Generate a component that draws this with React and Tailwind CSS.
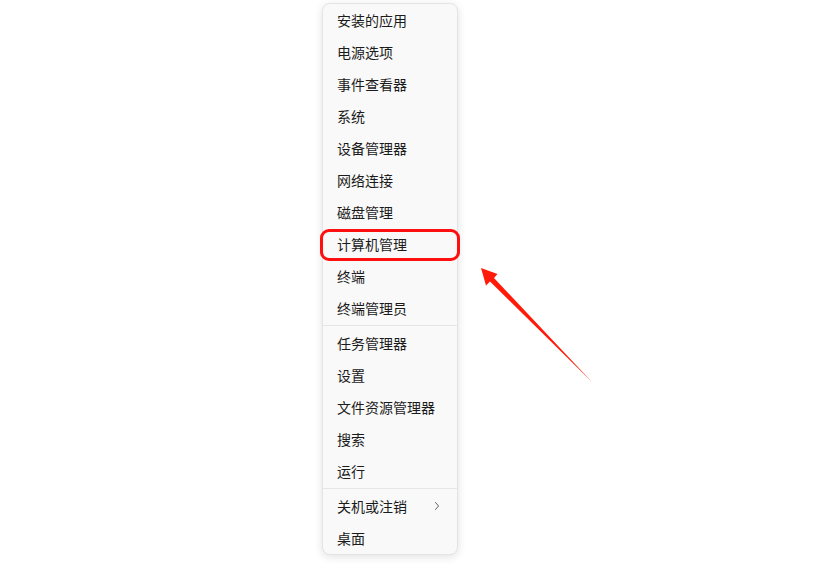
import React from 'react';

const groups = [
  ['安装的应用', '电源选项', '事件查看器', '系统', '设备管理器', '网络连接', '磁盘管理', '计算机管理', '终端', '终端管理员'],
  ['任务管理器', '设置', '文件资源管理器', '搜索', '运行'],
  ['关机或注销', '桌面'],
];

function Item({ label }) {
  const marked = label === '计算机管理';
  const sub = label === '关机或注销';
  return (
    <div className="relative h-8 flex items-center justify-between pl-[14px] pr-[17px] text-[14px] text-[#1b1b1b]">
      <span>{label}</span>
      {sub && (
        <svg width="6" height="10" viewBox="0 0 6 10" fill="none">
          <path d="M1.2 1.2 L4.6 5 L1.2 8.8" stroke="#606060" strokeWidth="1" />
        </svg>
      )}
      {marked && (
        <div className="absolute -left-[3px] -right-[3px] top-[1px] -bottom-px rounded-[9px] border-[3px] border-[#ff1010]" />
      )}
    </div>
  );
}

function App() {
  return (
    <div
      className="relative w-[825px] h-[564px] bg-white overflow-hidden"
      style={{ fontFamily: '"Noto Sans CJK SC", "Noto Sans", sans-serif' }}
    >
      <div className="ml-[322px] mt-[3px] w-[136px] bg-[#f9f9f9] border border-[#e4e4e4] rounded-[8px] shadow-[0_2px_8px_rgba(0,0,0,0.12)]">
        {groups.map((g, i) => (
          <div key={i}>
            {i > 0 && <div className="my-[1px] h-px bg-[#e6e6e6]" />}
            {g.map((label) => (
              <Item key={label} label={label} />
            ))}
          </div>
        ))}
      </div>
      <svg className="absolute left-0 top-0" width="825" height="564" viewBox="0 0 825 564">
        <polygon
          points="481,268 497.5,274 494,278 592,382 490,281.5 486,285.5"
          fill="#ff1a0a"
        />
      </svg>
    </div>
  );
}

export default App;
